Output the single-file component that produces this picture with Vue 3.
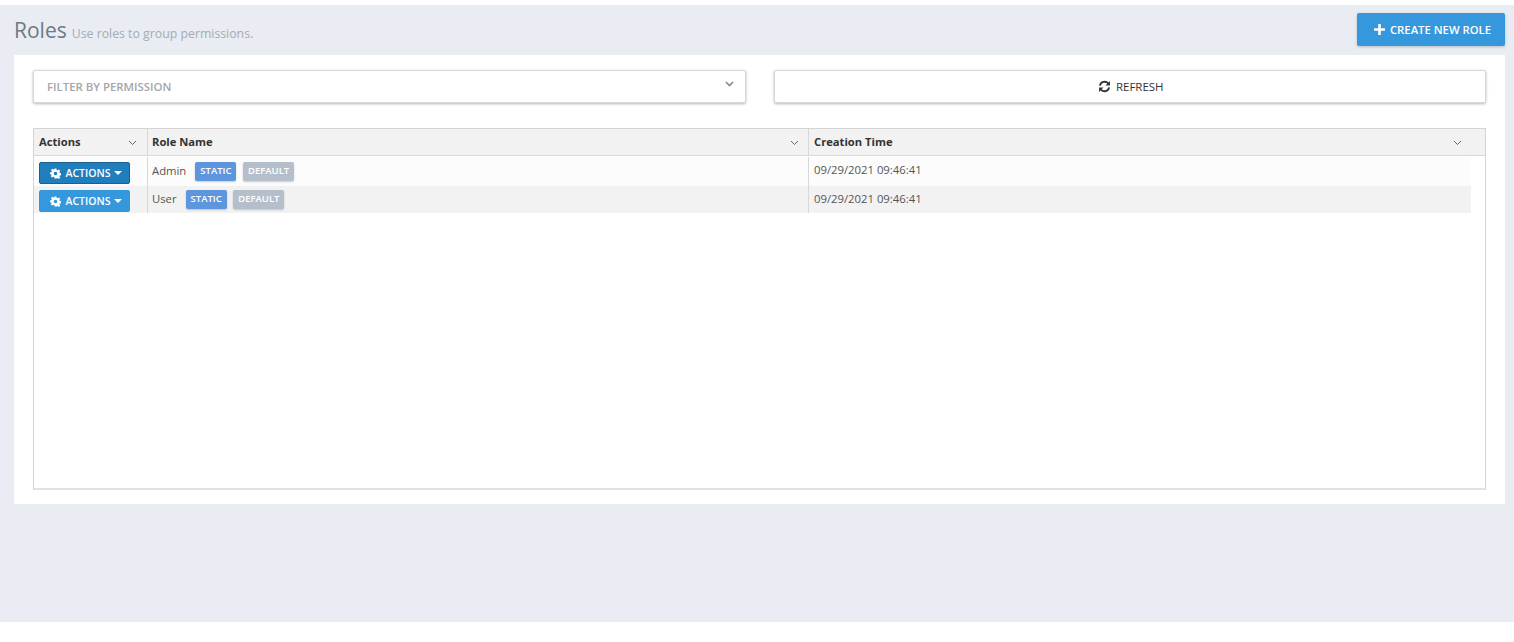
<script setup>
const roles = [
  { name: 'Admin', time: '09/29/2021 09:46:41', active: true },
  { name: 'User', time: '09/29/2021 09:46:41', active: false }
]
const columns = [
  { label: 'Actions', cls: 'c1' },
  { label: 'Role Name', cls: 'c2' },
  { label: 'Creation Time', cls: 'c3' }
]
</script>

<template>
  <div class="page">
    <header class="head">
      <div class="title-wrap">
        <h1 class="title">Roles</h1>
        <span class="sub">Use roles to group permissions.</span>
      </div>
      <button class="create">
        <svg class="plus" width="11" height="11" viewBox="0 0 11 11"><path d="M4.2 0h2.6v4.2H11v2.6H6.8V11H4.2V6.8H0V4.2h4.2z" fill="#fff"/></svg>
        CREATE NEW ROLE
      </button>
    </header>
    <main class="card">
      <div class="filters">
        <div class="box select">
          <span>FILTER BY PERMISSION</span>
          <svg width="9" height="6" viewBox="0 0 9 6"><path d="M1 1l3.500 3.500L8 1" fill="none" stroke="#888" stroke-width="1.6"/></svg>
        </div>
        <button class="box refresh">
          <svg width="13" height="13" viewBox="0 0 24 24" fill="none" stroke="#333" stroke-width="3.4">
            <path d="M3.500 10.500A8.800 8.800 0 0 1 19 6.500"/>
            <path d="M20.500 13.500A8.800 8.800 0 0 1 5 17.500"/>
            <path d="M22 2v8h-8z" fill="#333" stroke="none"/>
            <path d="M2 22v-8h8z" fill="#333" stroke="none"/>
          </svg>
          REFRESH
        </button>
      </div>
      <div class="table">
        <div class="thead">
          <div v-for="c in columns" :key="c.label" class="th" :class="c.cls">
            <span>{{ c.label }}</span>
            <svg width="9" height="6" viewBox="0 0 9 6"><path d="M1 1l3.500 3.500L8 1" fill="none" stroke="#666" stroke-width="1"/></svg>
          </div>
        </div>
        <div class="tbody">
          <div v-for="(r, i) in roles" :key="r.name" class="row" :class="{ odd: i === 1 }">
            <div class="td c1 act">
              <button class="actions" :class="{ active: r.active }">
                <svg width="11" height="11" viewBox="0 0 24 24"><path fill="#fff" fill-rule="evenodd" d="M10 1h4l.7 3.200 2 .8 2.800-1.800 2.800 2.800-1.800 2.800.8 2 3.200.7v4l-3.200.7-.8 2 1.800 2.800-2.800 2.800-2.800-1.800-2 .8L14 23h-4l-.7-3.200-2-.8-2.800 1.800-2.800-2.800 1.800-2.800-.8-2L0 14v-4l3.200-.7.8-2L2.200 4.500 5 1.700l2.800 1.800 1.500-.5zM12 8a4 4 0 1 0 0 8 4 4 0 0 0 0-8z"/></svg>
                ACTIONS
                <i class="caret"></i>
              </button>
            </div>
            <div class="td c2 name">
              <span class="nm">{{ r.name }}</span>
              <span class="tag st">STATIC</span>
              <span class="tag df">DEFAULT</span>
            </div>
            <div class="td c3 time">{{ r.time }}</div>
          </div>
        </div>
      </div>
    </main>
  </div>
</template>

<style>
html, body { margin: 0; background: #fff; }
</style>

<style scoped>
.page {
  margin-top: 5px;
  height: 617px;
  background: #e9ecf3;
  padding: 0 9px 0 14px;
  box-sizing: border-box;
  font-family: "Open Sans", sans-serif;
}
.head {
  height: 50px;
  display: flex;
  justify-content: space-between;
  align-items: flex-start;
}
.title-wrap { display: flex; align-items: baseline; padding-top: 10px; }
.title { margin: 0; font-size: 21px; line-height: 30px; font-weight: 400; color: #6c7a86; }
.sub { margin-left: 5px; font-size: 12.3px; color: #a4abb5; }
.create {
  margin-top: 8px;
  width: 148px;
  height: 33px;
  border: 0;
  border-radius: 2px;
  background: #3598dc;
  color: #fff;
  font: 600 11.3px "Open Sans", sans-serif;
  display: flex;
  align-items: center;
  justify-content: center;
  gap: 5px;
  padding: 0 0 0 3px;
  box-shadow: 0 1px 3px rgba(0, 0, 0, .2);
}
.card {
  height: 449px;
  background: #fff;
  padding: 15px 19px 14px;
  box-sizing: border-box;
  display: flex;
  flex-direction: column;
}
.filters { display: grid; grid-template-columns: 1fr 1fr; gap: 28px; }
.box {
  height: 33px;
  box-sizing: border-box;
  background: #fff;
  border: 1px solid #d4d7dd;
  border-radius: 2px;
  box-shadow: 0 1px 3px rgba(0, 0, 0, .28);
  font: 600 11.4px "Open Sans", sans-serif;
  display: flex;
  align-items: center;
}
.select { justify-content: space-between; padding: 0 11px 5px 13px; color: #a3a6aa; }
.select span { padding-top: 5px; }
.refresh { justify-content: center; gap: 5px; color: #333; font-size: 11.5px; font-weight: 400; padding: 0 0 0 2px; }
.table {
  margin-top: 25px;
  flex: 1;
  border: 1px solid #d4d4d4;
  border-bottom-width: 2px;
  border-bottom-color: #e2e2e2;
  display: flex;
  flex-direction: column;
}
.thead {
  display: flex;
  height: 27px;
  box-sizing: border-box;
  background: #f2f2f2;
  border-bottom: 1px solid #d8d8d8;
  flex: none;
  color: #333;
}
.th {
  display: flex;
  align-items: center;
  justify-content: space-between;
  box-sizing: border-box;
  padding: 0 10px 2px 5px;
  font-size: 11.2px;
  font-weight: 700;
  border-right: 1px solid #d8d8d8;
}
.th.c2 { padding-right: 9px; }
.th:last-child { border-right: 0; padding-right: 23px; }
.th svg { margin-top: 3px; }
.c1 { width: 114px; flex: none; }
.c2 { width: 661px; flex: none; }
.c3 { flex: 1; }
.th.c1, .td.c1 { padding-left: 5px; }
.th.c2, .td.c2 { padding-left: 4px; }
.th.c3, .td.c3 { padding-left: 5px; }
.tbody { padding-right: 14px; padding-top: 1px; }
.row { display: flex; height: 29px; background: #fcfcfc; }
.row.odd { height: 27px; background: #f2f2f2; }
.td { box-sizing: border-box; border-right: 1px solid #d8d8d8; }
.td:last-child { border-right: 0; }
.act { padding-top: 5px; }
.odd .act { padding-top: 4px; }
.actions {
  width: 91px;
  height: 22px;
  box-sizing: border-box;
  border: 1px solid #3598dc;
  border-radius: 2px;
  background: #3598dc;
  color: #fff;
  font: 600 10.5px "Open Sans", sans-serif;
  display: flex;
  align-items: center;
  justify-content: center;
  gap: 5px;
  padding: 0 0 0 2px;
}
.actions.active { background: #217ebd; border-color: #1f5f8b; }
.caret {
  width: 0;
  height: 0;
  margin-left: -2px;
  border-left: 4px solid transparent;
  border-right: 4px solid transparent;
  border-top: 4px solid #fff;
}
.name {
  display: flex;
  align-items: flex-start;
  padding-top: 5px;
  font-size: 11.3px;
  color: #555;
}
.odd .name { padding-top: 4px; }
.nm { line-height: 17px; margin-right: 9px; }
.tag {
  height: 19px;
  line-height: 18px;
  padding: 0 5px;
  margin-right: 6.500px;
  border-radius: 2px;
  color: #fff;
  font-size: 9.5px;
  font-weight: 600;
  box-shadow: 0 1px 2px rgba(0, 0, 0, .2);
}
.st { background: #5e96de; }
.df { background: #b5bfcc; }
.time { padding-top: 5px; font-size: 11.3px; line-height: 16px; color: #555; }
</style>
